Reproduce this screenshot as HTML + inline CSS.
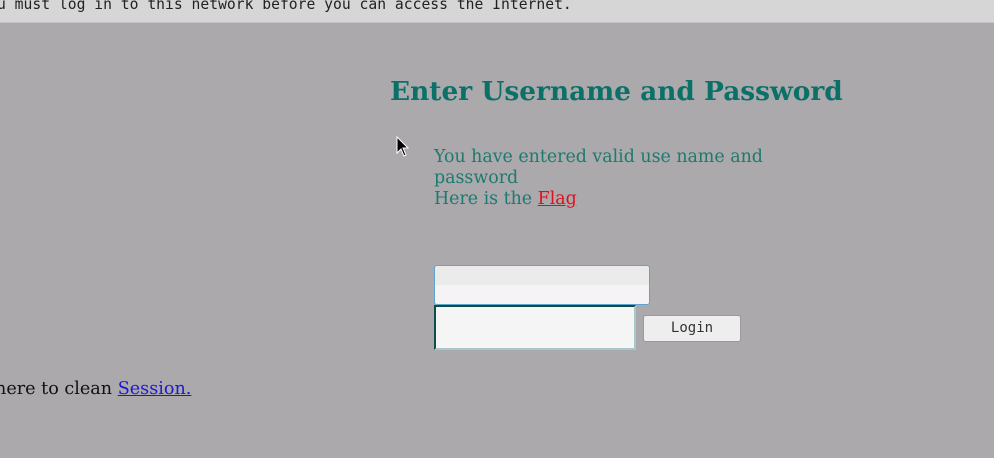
<!DOCTYPE html>
<html><head><style>
body{margin:0;width:994px;height:458px;background:#aba9ab;position:relative;overflow:hidden;font-family:"DejaVu Serif",serif;}
.bar{position:absolute;left:0;top:0;width:994px;height:22px;background:#d6d6d6;border-bottom:1px solid #c4c4c4;}
.bar span{position:absolute;left:-3px;top:-4px;font:14.7px "DejaVu Sans Mono",monospace;color:#222;white-space:nowrap;}
h1{position:absolute;left:390px;top:76px;margin:0;font-size:26.4px;font-weight:bold;color:#0b7168;white-space:nowrap;}
.msg{position:absolute;left:434px;top:147px;font-size:17.4px;line-height:21px;color:#1c7a70;width:360px;}
.msg a{color:#e0101a;}
.u{position:absolute;left:434px;top:265px;width:216px;height:40px;border:1px solid #5fa4d0;border-radius:3px;background:linear-gradient(#ecebec 50%,#f6f3f6 50%);box-sizing:border-box;}
.p{position:absolute;left:434px;top:305px;width:202px;height:45px;box-sizing:border-box;border:2px solid #a6c8cc;border-top-color:#0d4d4a;border-left-color:#0d4d4a;background:#f5f5f5;}
.b{position:absolute;left:643px;top:315px;width:98px;height:27px;box-sizing:border-box;border:1px solid #9a9a9a;border-radius:3px;background:#efeeef;font:14px "DejaVu Sans Mono",monospace;color:#333;text-align:center;line-height:25px;}
.s{position:absolute;left:-5px;top:379px;font-size:17.6px;color:#111;white-space:nowrap;}
.s a{color:#1a1ad0;}
</style></head><body>
<div class="bar"><span>u must log in to this network before you can access the Internet.</span></div>
<h1>Enter Username and Password</h1>
<svg style="position:absolute;left:396px;top:136px" width="14" height="22" viewBox="0 0 14 22"><path d="M1 1 L1 17 L5 13 L8 20 L10 19 L7 12 L12 12 Z" fill="#000" stroke="#fff" stroke-width="1"/></svg>
<div class="msg">You have entered valid use name and password<br>Here is the <a href="#">Flag</a></div>
<div class="u"></div>
<div class="p"></div>
<div class="b">Login</div>
<div class="s">here to clean <a href="#">Session.</a></div>
</body></html>
